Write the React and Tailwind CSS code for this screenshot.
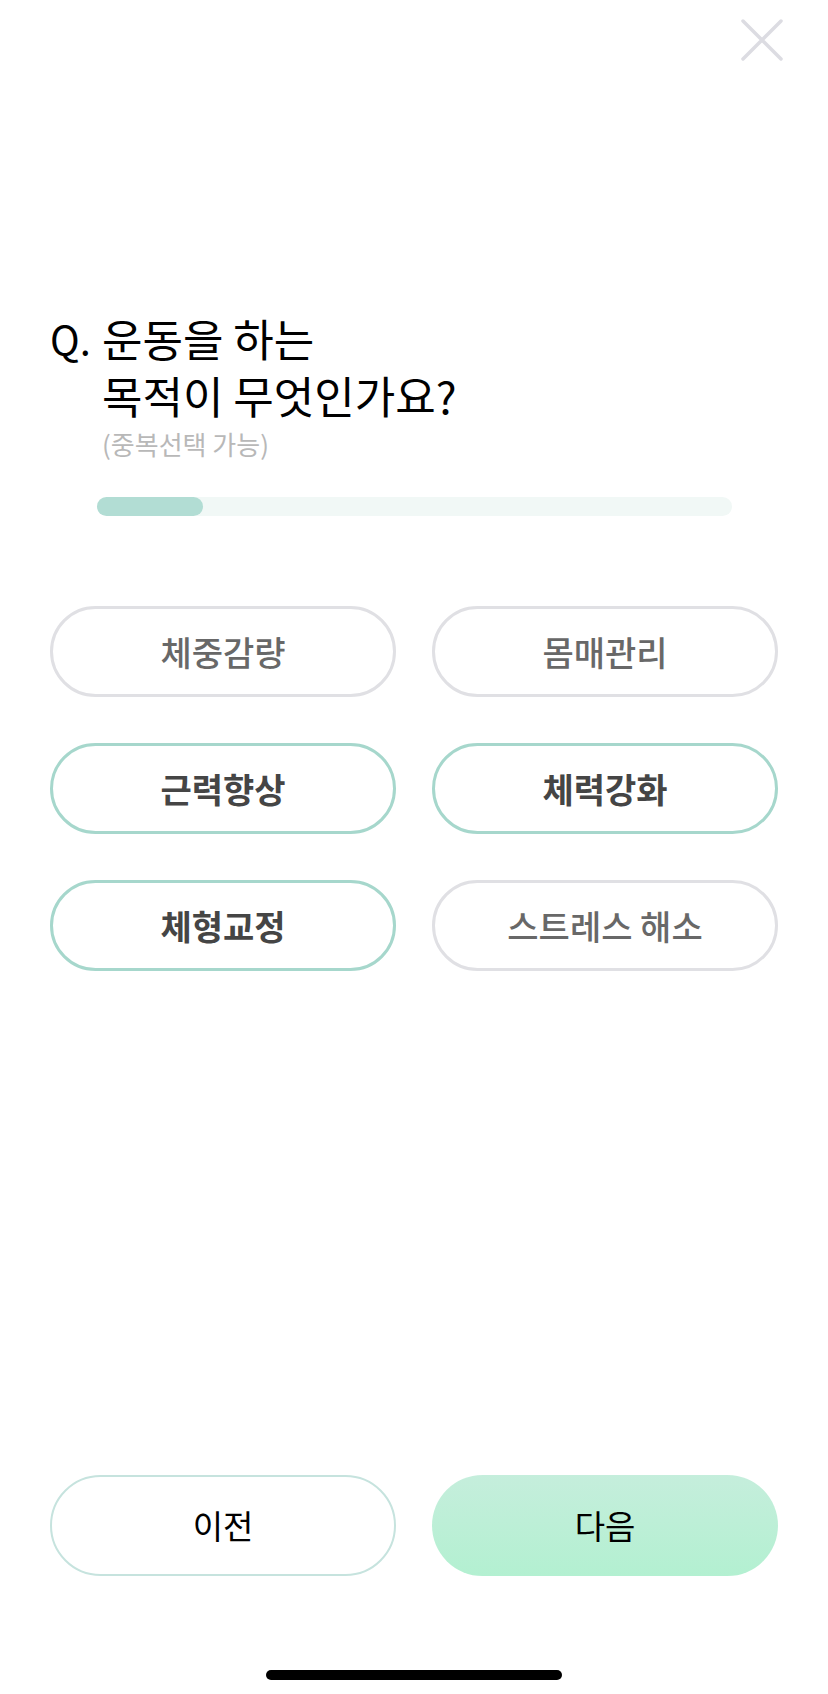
import React, { useState } from 'react';

const OPTIONS = [
  { id: 'weight', label: '체중감량' },
  { id: 'body', label: '몸매관리' },
  { id: 'muscle', label: '근력향상' },
  { id: 'stamina', label: '체력강화' },
  { id: 'posture', label: '체형교정' },
  { id: 'stress', label: '스트레스 해소' },
];

const CloseIcon = () => (
  <svg width="44" height="44" viewBox="0 0 44 44" fill="none">
    <path d="M3 3L41 41M41 3L3 41" stroke="#dcdce2" strokeWidth="3.5" strokeLinecap="round" />
  </svg>
);

const App = () => {
  // muscle, stamina, posture are picked in the screenshot
  const [selected, setSelected] = useState(['muscle', 'stamina', 'posture']);

  const toggle = (id) => {
    setSelected(prev => (prev.includes(id) ? prev.filter(v => v !== id) : [...prev, id]));
  };

  return (
    <div className="flex h-[1694px] w-[828px] flex-col bg-white font-['Noto_Sans_CJK_KR',sans-serif]">
      {/* Header */}
      <div className="flex justify-end pr-[44px] pt-[18px]">
        <button type="button" className="h-[44px] w-[44px]">
          <CloseIcon />
        </button>
      </div>

      {/* Question */}
      <div className="mt-[248px] flex pl-[50px]">
        <span className="w-[52px] shrink-0 text-[40px] leading-[57px] text-black">Q.</span>
        <div>
          <h1 className="text-[44px] font-normal leading-[57px] text-black">
            운동을 하는
            <br />
            목적이 무엇인가요?
          </h1>
          <p className="mt-[5px] text-[26px] leading-[30px] text-[#b8b8b8]">(중복선택 가능)</p>
        </div>
      </div>

      {/* Progress */}
      <div className="ml-[97px] mt-[38px] h-[19px] w-[635px] rounded-full bg-[#f1f8f6]">
        <div className="h-full w-[106px] rounded-full bg-[#b2ddd4]" />
      </div>

      {/* Options */}
      <div className="mt-[90px] grid grid-cols-2 gap-x-[36px] gap-y-[46px] px-[50px]">
        {OPTIONS.map(opt => {
          const active = selected.includes(opt.id);
          return (
            <button
              key={opt.id}
              type="button"
              onClick={() => toggle(opt.id)}
              className={
                active
                  ? 'flex h-[91px] items-center justify-center rounded-full border-[3px] border-[#a6d7cc] bg-white text-[34px] font-semibold text-[#454545]'
                  : 'flex h-[91px] items-center justify-center rounded-full border-[3px] border-[#e0e0e4] bg-white text-[34px] font-medium text-[#686868]'
              }
            >
              {opt.label}
            </button>
          );
        })}
      </div>

      <div className="flex-1" />

      {/* Footer buttons */}
      <div className="grid grid-cols-2 gap-x-[36px] px-[50px]">
        <button
          type="button"
          className="flex h-[101px] items-center justify-center rounded-full border-2 border-[#c6e3de] bg-white text-[33px] text-black"
        >
          이전
        </button>
        <button
          type="button"
          className="flex h-[101px] items-center justify-center rounded-full bg-gradient-to-b from-[#c5eedc] to-[#b3f0d1] text-[33px] text-black"
        >
          다음
        </button>
      </div>

      {/* Home indicator */}
      <div className="flex justify-center pb-[14px] pt-[94px]">
        <div className="h-[10px] w-[296px] rounded-full bg-black" />
      </div>
    </div>
  );
};

export default App;
